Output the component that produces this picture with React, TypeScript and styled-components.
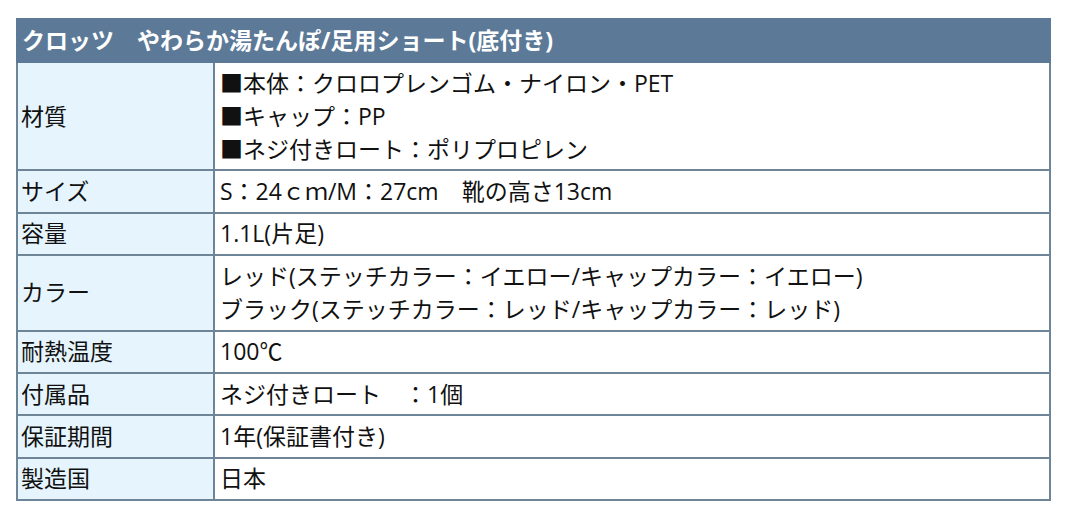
import React from "react";
import styled, { createGlobalStyle } from "styled-components";

const Global = createGlobalStyle`
  html, body { margin: 0; padding: 0; background: #ffffff; }
  body { font-family: "Open Sans", "Noto Sans CJK JP", sans-serif; }
`;

const Page = styled.div`
  padding: 18px 29px 0 16px;
`;

const Table = styled.table`
  width: 1035px;
  border-collapse: collapse;
  font-size: 23px;
  color: #111;
`;

const HeadCell = styled.th`
  background: #5c7a98;
  color: #ffffff;
  font-weight: 700;
  text-align: left;
  padding: 4px 4px;
  line-height: 33px;
  height: 33px;
  border: 2px solid #5c7a98;
`;

const Label = styled.td`
  width: 189px;
  background: #e6f5fd;
  border: 2px solid #6e8598;
  padding: 3.7px 3px;
  line-height: 33px;
  vertical-align: middle;
  white-space: nowrap;
`;

const Value = styled.td`
  background: #ffffff;
  border: 2px solid #6e8598;
  padding: 3.7px 5px;
  line-height: 33px;
  vertical-align: middle;
  white-space: pre;
`;

const Line = styled.div``;

const rows: [string, string[]][] = [
  ["材質", ["■本体：クロロプレンゴム・ナイロン・PET", "■キャップ：PP", "■ネジ付きロート：ポリプロピレン"]],
  ["サイズ", ["S：24ｃｍ/M：27cm　靴の高さ13cm"]],
  ["容量", ["1.1L(片足)"]],
  ["カラー", ["レッド(ステッチカラー：イエロー/キャップカラー：イエロー)", "ブラック(ステッチカラー：レッド/キャップカラー：レッド)"]],
  ["耐熱温度", ["100℃"]],
  ["付属品", ["ネジ付きロート　：1個"]],
  ["保証期間", ["1年(保証書付き)"]],
  ["製造国", ["日本"]],
];

export default function App() {
  return (
    <Page>
      <Global />
      <Table>
        <thead>
          <tr>
            <HeadCell colSpan={2}>クロッツ　やわらか湯たんぽ/足用ショート(底付き)</HeadCell>
          </tr>
        </thead>
        <tbody>
          {rows.map(([label, lines]) => (
            <tr key={label}>
              <Label>{label}</Label>
              <Value>
                {lines.map((l) => (
                  <Line key={l}>{l}</Line>
                ))}
              </Value>
            </tr>
          ))}
        </tbody>
      </Table>
    </Page>
  );
}
